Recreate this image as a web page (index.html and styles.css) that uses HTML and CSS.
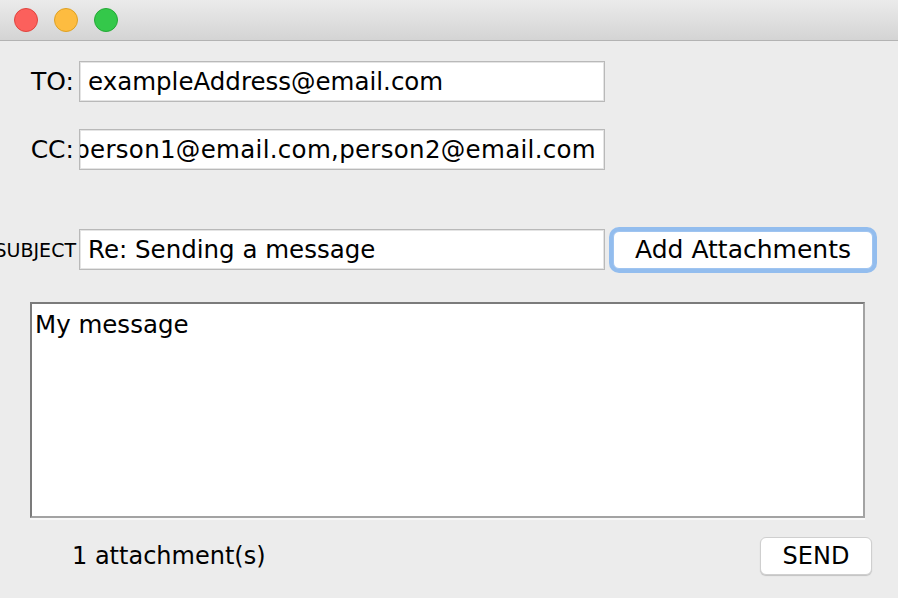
FILE: index.html
```html
<!DOCTYPE html>
<html lang="en">
<head>
<meta charset="utf-8">
<title>Send Mail</title>
<link rel="stylesheet" href="styles.css">
</head>
<body>
<div class="window">
  <div class="titlebar">
    <span class="light red"></span>
    <span class="light yellow"></span>
    <span class="light green"></span>
  </div>
  <div class="content">
    <div class="row row-to">
      <div class="label">TO:</div>
      <div class="field">exampleAddress@email.com</div>
    </div>
    <div class="row row-cc">
      <div class="label">CC:</div>
      <div class="field field-scrolled"><span>person1@email.com,person2@email.com</span></div>
    </div>
    <div class="row row-subject">
      <div class="label label-small">SUBJECT</div>
      <div class="field">Re: Sending a message</div>
      <button class="btn btn-focus">Add Attachments</button>
    </div>
    <div class="message">My message</div>
    <div class="footer">
      <span class="status">1 attachment(s)</span>
      <button class="btn btn-send">SEND</button>
    </div>
  </div>
</div>
</body>
</html>
```
FILE: styles.css
```css
* { box-sizing: border-box; }
html, body {
  margin: 0;
  padding: 0;
  background: #ececec;
}
body {
  font-family: "DejaVu Sans", sans-serif;
  color: #000;
}
.window {
  width: 898px;
  height: 598px;
  background: #ececec;
  overflow: hidden;
}
.titlebar {
  height: 41px;
  background: linear-gradient(#ebebeb, #d4d4d4);
  border-bottom: 1px solid #b3b3b3;
  display: flex;
  align-items: center;
  padding-left: 14px;
  gap: 16px;
}
.light {
  width: 24px;
  height: 24px;
  border-radius: 50%;
  display: block;
  margin-top: -1px;
}
.red { background: #fc605c; border: 1px solid #e0443e; }
.yellow { background: #fdbc40; border: 1px solid #dea123; }
.green { background: #34c84a; border: 1px solid #24a936; }

.content {
  padding-top: 20px;
}
.row {
  display: flex;
  align-items: center;
  height: 41px;
}
.row-cc { margin-top: 27px; }
.row-subject { margin-top: 59px; }
.label {
  width: 79px;
  flex: none;
  padding-right: 5px;
  display: flex;
  justify-content: flex-end;
  overflow: hidden;
  white-space: nowrap;
  font-size: 25px;
}
.label-small {
  font-size: 19px;
  padding-right: 3px;
}
.field {
  width: 526px;
  height: 41px;
  flex: none;
  background: #fff;
  border: 1px solid #b9b9b9;
  box-shadow: inset 0 0 0 1px #e4e4e4;
  font-size: 24.5px;
  line-height: 39px;
  padding: 0 8px;
  white-space: nowrap;
  overflow: hidden;
}
.field-scrolled {
  display: flex;
  justify-content: flex-end;
  padding: 0 8px 0 4px;
}
.field-scrolled span {
  flex: none;
  letter-spacing: 0.3px;
}
.btn {
  font-family: "DejaVu Sans", sans-serif;
  background: #fff;
  color: #000;
  border: 1px solid #c4c4c4;
  border-radius: 6px;
  padding: 0;
  margin: 0;
}
.btn-focus {
  margin-left: 8px;
  width: 260px;
  height: 38px;
  font-size: 25px;
  line-height: 36px;
  border-color: #9fc4f0;
  box-shadow: 0 0 0 4px #93bdee;
}
.message {
  margin: 32px 0 0 30px;
  width: 835px;
  height: 216px;
  background: #fff;
  border: 2px solid;
  border-color: #7b7b7b #a3a3a3 #a3a3a3 #7b7b7b;
  box-shadow: 0 2px 0 0 #f8f8f8;
  font-size: 24.5px;
  padding: 3px 0 0 3px;
  line-height: 36px;
}
.footer {
  display: flex;
  align-items: center;
  justify-content: space-between;
  margin-top: 19px;
  padding: 0 26px 0 72px;
  height: 38px;
}
.status {
  font-size: 24px;
  margin-top: -1px;
}
.btn-send {
  width: 112px;
  height: 38px;
  font-size: 24px;
  line-height: 36px;
  border-color: #cfcfcf;
  box-shadow: 0 1px 1px rgba(0,0,0,0.18);
}
```
